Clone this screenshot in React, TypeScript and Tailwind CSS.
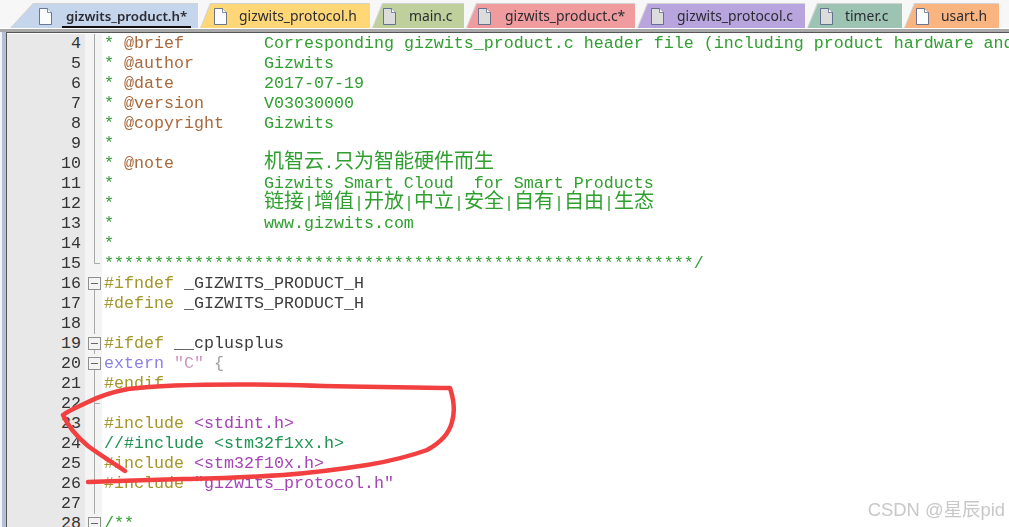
import type { ReactNode } from "react"

type Fold = "none" | "line" | "corner" | "box" | "end"

const FoldMark = ({ type }: { type: Fold }) => (
  <svg width="17" height="20" viewBox="0 0 17 20" className="block shrink-0">
    {type === "line" && <path d="M9.5 0V20" stroke="#a8a8a8" />}
    {type === "corner" && <path d="M9.5 0V9.5H15" stroke="#a8a8a8" fill="none" />}
    {type === "end" && <path d="M9.5 0V20M9.5 9.5H15" stroke="#a8a8a8" fill="none" />}
    {type === "box" && (
      <>
        <path d="M9.5 15V20" stroke="#a8a8a8" />
        <rect x="3.5" y="3.5" width="12" height="12" fill="#f4f4f4" stroke="#8f8f8f" />
        <path d="M6 9.5H13" stroke="#666" />
      </>
    )}
  </svg>
)

const Cn = ({ children }: { children: ReactNode }) => <span className="text-[20px] leading-[0]">{children}</span>

const Star = () => <span className="text-[#2f9f2f]">*</span>
const Tag = ({ children }: { children: ReactNode }) => <span className="text-[#a8693c]">{children}</span>
const Green = ({ children }: { children: ReactNode }) => <span className="text-[#2f9f2f]">{children}</span>
const Pre = ({ children }: { children: ReactNode }) => <span className="text-[#a39528]">{children}</span>
const Id = ({ children }: { children: ReactNode }) => <span className="text-[#3c3c3c]">{children}</span>
const Inc = ({ children }: { children: ReactNode }) => <span className="text-[#a544b5]">{children}</span>

const rows: { n: number; fold: Fold; code: ReactNode }[] = [
  { n: 4, fold: "line", code: <><Star /> <Tag>@brief</Tag>{"        "}<Green>Corresponding gizwits_product.c header file (including product hardware and</Green></> },
  { n: 5, fold: "line", code: <><Star /> <Tag>@author</Tag>{"       "}<Green>Gizwits</Green></> },
  { n: 6, fold: "line", code: <><Star /> <Tag>@date</Tag>{"         "}<Green>2017-07-19</Green></> },
  { n: 7, fold: "line", code: <><Star /> <Tag>@version</Tag>{"      "}<Green>V03030000</Green></> },
  { n: 8, fold: "line", code: <><Star /> <Tag>@copyright</Tag>{"    "}<Green>Gizwits</Green></> },
  { n: 9, fold: "line", code: <Star /> },
  { n: 10, fold: "line", code: <><Star /> <Tag>@note</Tag>{"         "}<Green><Cn>机智云</Cn>.<Cn>只为智能硬件而生</Cn></Green></> },
  { n: 11, fold: "line", code: <><Star />{"               "}<Green>Gizwits Smart Cloud  for Smart Products</Green></> },
  { n: 12, fold: "line", code: <><Star />{"               "}<Green><Cn>链接</Cn>|<Cn>增值</Cn>|<Cn>开放</Cn>|<Cn>中立</Cn>|<Cn>安全</Cn>|<Cn>自有</Cn>|<Cn>自由</Cn>|<Cn>生态</Cn></Green></> },
  { n: 13, fold: "line", code: <><Star />{"               "}<Green>www.gizwits.com</Green></> },
  { n: 14, fold: "line", code: <Star /> },
  { n: 15, fold: "corner", code: <Green>{"*".repeat(59)}/</Green> },
  { n: 16, fold: "box", code: <><Pre>#ifndef</Pre> <Id>_GIZWITS_PRODUCT_H</Id></> },
  { n: 17, fold: "line", code: <><Pre>#define</Pre> <Id>_GIZWITS_PRODUCT_H</Id></> },
  { n: 18, fold: "line", code: null },
  { n: 19, fold: "box", code: <><Pre>#ifdef</Pre> <Id>__cplusplus</Id></> },
  { n: 20, fold: "box", code: <><span className="text-[#8c80e6]">extern</span> <span className="text-[#cf93bd]">"C"</span> <span className="text-[#a0a0a0]">{"{"}</span></> },
  { n: 21, fold: "line", code: <Pre>#endif</Pre> },
  { n: 22, fold: "end", code: null },
  { n: 23, fold: "line", code: <><Pre>#include</Pre> <Inc>{"<stdint.h>"}</Inc></> },
  { n: 24, fold: "line", code: <span className="text-[#1f9350]">{"//#include <stm32f1xx.h>"}</span> },
  { n: 25, fold: "line", code: <><Pre>#include</Pre> <Inc>{"<stm32f10x.h>"}</Inc></> },
  { n: 26, fold: "line", code: <><Pre>#include</Pre> <Inc>"gizwits_protocol.h"</Inc></> },
  { n: 27, fold: "line", code: null },
  { n: 28, fold: "box", code: <Green>/**</Green> },
]

const DocIcon = ({ dotted }: { dotted?: boolean }) => (
  <svg width="15" height="19" viewBox="0 0 15 19" className="shrink-0">
    <path d="M1.5 1.5H9.5L13.5 5.5V17.5H1.5Z" fill={dotted ? "#dcdcdc" : "#fbfcfe"} stroke="#4a5a80" strokeOpacity="0.8" />
    <path d="M9.5 1.5V5.5H13.5" fill="#fff" stroke="#4a5a80" strokeOpacity="0.7" />
  </svg>
)

const tabs = [
  { name: "gizwits_protocol.h", width: "w-[170px]", box: "pl-[13px] gap-[11px]", bg: "bg-[#ffd777]" },
  { name: "main.c", width: "w-[92px]", box: "pl-[10px] gap-[12px]", bg: "bg-[#bfd09c]", dotted: true },
  { name: "gizwits_product.c*", width: "w-[169px]", box: "pl-[11px] gap-[13px]", bg: "bg-[#f09c9e]", dotted: true },
  { name: "gizwits_protocol.c", width: "w-[168px]", box: "pl-[13px] gap-[12px]", bg: "bg-[#b9a5de]", dotted: true },
  { name: "timer.c", width: "w-[95px]", box: "pl-[12px] gap-[11px]", bg: "bg-[#9dc3b3]", dotted: true },
  { name: "usart.h", width: "w-[95px]", box: "pl-[11px] gap-[11px]", bg: "bg-[#f9b47f]" },
]

export default function App() {
  return (
    <div className="relative h-[527px] w-[1009px] overflow-hidden bg-white">
      {/* tab strip */}
      <div className="flex h-[28px] items-end bg-[#f7f7f7] pl-[10px] font-['Noto_Sans',sans-serif] text-[13.9px] text-[#2b2b33] blur-[0.3px]">
        <div className="h-[25px] w-[188px] bg-[#d2d2d2] [clip-path:polygon(0_100%,23px_0,100%_0,100%_100%)]">
          <div className="mt-px flex h-[24px] items-center gap-[9px] bg-[#c4d5ec] pl-[28px] [clip-path:polygon(1px_100%,24px_0,100%_0,100%_100%)]">
            <DocIcon />
            <span className="mt-[2px] border-b-2 border-[#111] px-[4px] text-[13.3px] font-semibold leading-[19px]">gizwits_product.h*</span>
          </div>
        </div>
        {tabs.map((t) => (
          <div key={t.name} className={`ml-[2px] h-[25px] bg-[#d2d2d2] [clip-path:polygon(0_100%,10px_0,100%_0,100%_100%)] ${t.width}`}>
            <div className={`mt-px flex h-[24px] items-center [clip-path:polygon(1px_100%,11px_0,100%_0,100%_100%)] ${t.box} ${t.bg}`}>
              <DocIcon dotted={t.dotted} />
              <span>{t.name}</span>
            </div>
          </div>
        ))}
      </div>

      <div className="h-[4px] border-t border-white bg-[#a8a8a8]" />

      {/* editor */}
      <div className="flex h-[495px] border-l-[2px] border-[#f4f4f4] bg-white">
        <div className="w-[4px] shrink-0 bg-[#b4bfd8]" />
        <div className="min-w-0 flex-1 overflow-hidden border-l border-t border-[#555] pt-px font-['Liberation_Mono','Noto_Sans_CJK_SC',monospace] text-[16.67px] leading-[20px] blur-[0.35px]">
          {rows.map((r) => (
            <div key={r.n} className="flex h-[20px] whitespace-pre">
              <div className="w-[78px] shrink-0 bg-[#e8e8e8] pr-[4px] text-right text-[#333]">{r.n}</div>
              <div className="flex w-[17px] shrink-0 bg-[#f4f4f4]"><FoldMark type={r.fold} /></div>
              <div className="w-[2px] shrink-0" />
              <div>{r.code}</div>
            </div>
          ))}
        </div>
      </div>

      {/* hand drawn red mark */}
      <svg width="1009" height="527" viewBox="0 0 1009 527" className="absolute inset-0">
        <path
          d="M125 471C112 462 100 455 88 446C76 436 68 426 63 415C70 410 78 407 88 402C100 396 112 392 128 389C170 384 230 384 290 385C350 387 400 387 450 388C454 400 455 412 452 422C449 434 440 443 427 450C405 458 385 462 367 465C335 470 310 473 283 475C250 477 215 479 183 479C150 480 120 481 88 482"
          fill="none"
          stroke="#f24040"
          strokeWidth="4.5"
          strokeLinecap="round"
          strokeLinejoin="round"
        />
      </svg>

      {/* watermark */}
      <div className="absolute bottom-[7px] right-[4px] font-['Liberation_Sans','Noto_Sans_CJK_SC',sans-serif] text-[18.4px] leading-[21px] text-[#c8c8c8] blur-[0.3px]">
        CSDN @星辰pid
      </div>
    </div>
  )
}
